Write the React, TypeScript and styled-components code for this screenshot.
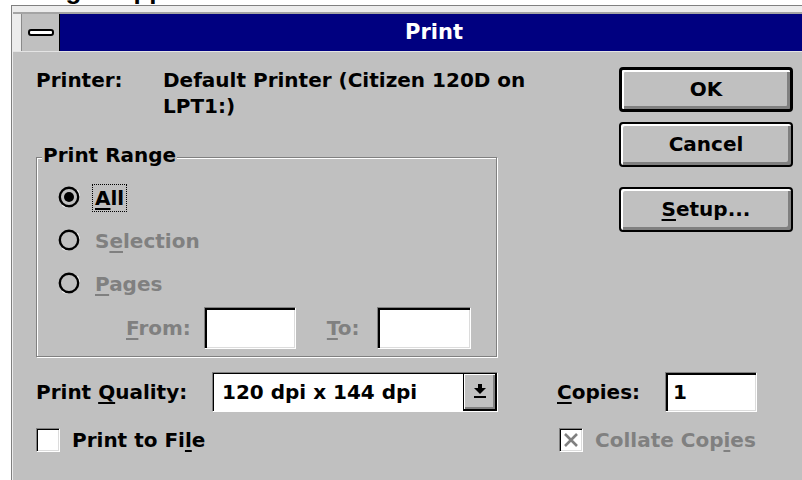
import styled, { createGlobalStyle } from 'styled-components';

const GlobalStyle = createGlobalStyle`
  html, body {
    margin: 0;
    padding: 0;
    background: #ffffff;
    overflow: hidden;
  }
  body {
    font-family: "DejaVu Sans", "Liberation Sans", sans-serif;
    font-size: 20px;
    font-weight: bold;
    color: #000000;
  }
`;

const Page = styled.div`
  width: 802px;
  height: 480px;
  overflow: hidden;
`;

// heading above the dialog, mostly scrolled away
const Caption = styled.div`
  height: 5px;
  overflow: hidden;
  padding-left: 2px;
  font-family: "Liberation Sans", Arial, sans-serif;
  font-size: 26px;
  line-height: 26px;
  white-space: nowrap;

  & > span {
    display: block;
    margin-top: -23px;
  }
`;

const Window = styled.div`
  box-sizing: border-box;
  margin-left: 11px;
  width: 797px;
  height: 475px;
  padding: 6px 0 0 1px;
  border-top: 1px solid #808080;
  border-left: 1px solid #808080;
  background: #ececec;
  display: flex;
  flex-direction: column;
`;

const Frame = styled.div`
  flex: 1;
  display: flex;
  flex-direction: column;
  border-top: 2px solid #a4a4a4;
  background: #c0c0c0;
`;

const TitleBar = styled.div`
  height: 37px;
  display: flex;
  padding-left: 8px;
  background: #ececec;
`;

const SysMenu = styled.div`
  box-sizing: border-box;
  width: 39px;
  display: flex;
  align-items: center;
  justify-content: center;
  background: #c0c0c0;
  border-left: 1px solid #8a8a8a;
  border-right: 1px solid #000000;
`;

const SysDash = styled.div`
  box-sizing: border-box;
  width: 26px;
  height: 7px;
  border: 2px solid #000000;
  border-radius: 3px;
  background: #ffffff;
`;

const Title = styled.div`
  flex: 1;
  background: #000080;
  color: #ffffff;
  font-size: 21px;
  line-height: 37px;
  text-align: center;
`;

const Body = styled.div`
  flex: 1;
  border-top: 1px solid #e4e4e4;
  padding: 15px 15px 0 23px;
  display: flex;
  flex-direction: column;
`;

const TopSection = styled.div`
  display: flex;
  justify-content: space-between;
  align-items: flex-start;
`;

const LeftColumn = styled.div`
  display: flex;
  flex-direction: column;
`;

const PrinterRow = styled.div`
  display: flex;
  line-height: 26px;
`;

const PrinterLabel = styled.div`
  width: 127px;
`;

const PrinterName = styled.div`
  width: 400px;
`;

const GroupBox = styled.div`
  position: relative;
  box-sizing: border-box;
  width: 461px;
  margin-top: 38px;
  padding: 26px 0 7px 21px;
  border: 1px solid #808080;
  box-shadow: inset 1px 1px 0 #ffffff, 1px 1px 0 #ffffff;
`;

// caption sits on top of the frame line
const Legend = styled.div`
  position: absolute;
  top: -16px;
  left: 5px;
  padding: 0 1px;
  line-height: 26px;
  background: #c0c0c0;
`;

const Options = styled.div`
  display: flex;
  flex-direction: column;
  gap: 15px;
`;

const RadioRow = styled.div`
  height: 28px;
  display: flex;
  align-items: center;
`;

const OptionLabel = styled.span<{ $focused?: boolean; $disabled?: boolean }>`
  margin-left: 10px;
  padding: 0 2px;
  line-height: 26px;
  border: 1px dotted ${(p) => (p.$focused ? '#000000' : 'transparent')};
  color: ${(p) => (p.$disabled ? '#808080' : '#000000')};
`;

const Key = styled.span`
  text-decoration: underline;
  text-decoration-thickness: 2px;
  text-underline-offset: 3px;
`;

const RangeRow = styled.div`
  display: flex;
  align-items: center;
  margin-top: 9px;
  padding-left: 68px;
`;

const RangeLabel = styled.span<{ $gap: number; $lead?: number }>`
  color: #808080;
  margin-left: ${(p) => p.$lead ?? 0}px;
  margin-right: ${(p) => p.$gap}px;
`;

const Field = styled.div<{ $width: number; $height: number }>`
  box-sizing: border-box;
  width: ${(p) => p.$width}px;
  height: ${(p) => p.$height}px;
  display: flex;
  align-items: center;
  padding-left: 7px;
  background: #ffffff;
  border: 1px solid;
  border-color: #808080 #ffffff #ffffff #808080;
  box-shadow: inset 2px 2px 0 #000000, inset -1px -1px 0 #dcdcdc;
`;

const ButtonColumn = styled.div`
  width: 174px;
  display: flex;
  flex-direction: column;
`;

const Button = styled.div<{ $default?: boolean; $space?: number }>`
  box-sizing: border-box;
  height: 45px;
  margin-top: ${(p) => p.$space ?? 0}px;
  display: flex;
  align-items: center;
  justify-content: center;
  padding-bottom: 2px;
  border: ${(p) => (p.$default ? 3 : 2)}px solid #000000;
  border-radius: 4px;
  background: #c0c0c0;
  box-shadow: inset 2px 2px 0 #ffffff, inset -3px -3px 0 #808080;
`;

const BottomGrid = styled.div`
  display: grid;
  grid-template-columns: 521px 1fr;
  grid-template-rows: 40px 24px;
  row-gap: 16px;
  margin-top: 15px;
`;

const Cell = styled.div<{ $indent?: number }>`
  display: flex;
  align-items: center;
  padding-left: ${(p) => p.$indent ?? 0}px;
`;

const FieldLabel = styled.span<{ $width: number }>`
  width: ${(p) => p.$width}px;
`;

const Combo = styled.div`
  box-sizing: border-box;
  width: 286px;
  height: 40px;
  display: flex;
  background: #ffffff;
  border: 1px solid;
  border-color: #808080 #ffffff #ffffff #808080;
  box-shadow: inset 1px 1px 0 #000000;
`;

const ComboText = styled.div`
  flex: 1;
  display: flex;
  align-items: center;
  padding-left: 9px;
`;

const DropButton = styled.div`
  box-sizing: border-box;
  width: 34px;
  display: flex;
  align-items: center;
  justify-content: center;
  background: #c0c0c0;
  border-left: 1px solid #000000;
  border-top: 1px solid #000000;
  border-right: 2px solid #000000;
  border-bottom: 2px solid #000000;
  box-shadow: inset 1px 1px 0 #ffffff, inset -2px -2px 0 #808080;
`;

const CheckBox = styled.div`
  box-sizing: border-box;
  width: 24px;
  height: 24px;
  display: flex;
  align-items: center;
  justify-content: center;
  background: #ffffff;
  border: 1px solid;
  border-color: #808080 #ffffff #ffffff #808080;
  box-shadow: inset 1px 1px 0 #000000, inset -1px -1px 0 #dcdcdc;
`;

const CheckText = styled.span<{ $disabled?: boolean }>`
  margin-left: 12px;
  color: ${(p) => (p.$disabled ? '#808080' : '#000000')};
`;

const RadioMark = ({ checked }: { checked?: boolean }) => (
  <svg width="24" height="24" viewBox="0 0 24 24">
    <path d="M19.4 4.4 A11 11 0 0 1 4.4 19.4" fill="none" stroke="#ffffff" strokeWidth="1.6" />
    <circle cx="11" cy="11" r="9.2" fill="none" stroke="#000000" strokeWidth="2.4" />
    {checked && <circle cx="11" cy="11" r="5" fill="#000000" />}
  </svg>
);

const DropArrow = () => (
  <svg width="14" height="15" viewBox="0 0 14 15">
    <rect x="5" y="0" width="4" height="4" fill="#000000" />
    <path d="M1 4 H13 L7 10 Z" fill="#000000" />
    <rect x="1" y="12" width="12" height="2" fill="#000000" />
  </svg>
);

const GrayCross = () => (
  <svg width="18" height="18" viewBox="0 0 18 18">
    <path d="M3 3 L15 15 M15 3 L3 15" stroke="#808080" strokeWidth="2.6" />
  </svg>
);

const App = () => (
  <>
    <GlobalStyle />
    <Page>
      <Caption>
        <span>Dialog Cropped</span>
      </Caption>
      <Window>
        <Frame>
          <TitleBar>
            <SysMenu>
              <SysDash />
            </SysMenu>
            <Title>Print</Title>
          </TitleBar>
          <Body>
            <TopSection>
              <LeftColumn>
                <PrinterRow>
                  <PrinterLabel>Printer:</PrinterLabel>
                  <PrinterName>Default Printer (Citizen 120D on LPT1:)</PrinterName>
                </PrinterRow>
                <GroupBox>
                  <Legend>Print Range</Legend>
                  <Options>
                    <RadioRow>
                      <RadioMark checked />
                      <OptionLabel $focused>
                        <Key>A</Key>ll
                      </OptionLabel>
                    </RadioRow>
                    <RadioRow>
                      <RadioMark />
                      <OptionLabel $disabled>
                        S<Key>e</Key>lection
                      </OptionLabel>
                    </RadioRow>
                    <RadioRow>
                      <RadioMark />
                      <OptionLabel $disabled>
                        <Key>P</Key>ages
                      </OptionLabel>
                    </RadioRow>
                  </Options>
                  <RangeRow>
                    <RangeLabel $gap={13}>
                      <Key>F</Key>rom:
                    </RangeLabel>
                    <Field $width={92} $height={42} />
                    <RangeLabel $gap={17} $lead={31}>
                      <Key>T</Key>o:
                    </RangeLabel>
                    <Field $width={94} $height={42} />
                  </RangeRow>
                </GroupBox>
              </LeftColumn>
              <ButtonColumn>
                <Button $default>OK</Button>
                <Button $space={10}>Cancel</Button>
                <Button $space={20}>
                  <span>
                    <Key>S</Key>etup...
                  </span>
                </Button>
              </ButtonColumn>
            </TopSection>
            <BottomGrid>
              <Cell>
                <FieldLabel $width={176}>
                  Print <Key>Q</Key>uality:
                </FieldLabel>
                <Combo>
                  <ComboText>120 dpi x 144 dpi</ComboText>
                  <DropButton>
                    <DropArrow />
                  </DropButton>
                </Combo>
              </Cell>
              <Cell>
                <FieldLabel $width={108}>
                  <Key>C</Key>opies:
                </FieldLabel>
                <Field $width={92} $height={40}>
                  1
                </Field>
              </Cell>
              <Cell>
                <CheckBox />
                <CheckText>
                  Print to Fi<Key>l</Key>e
                </CheckText>
              </Cell>
              <Cell $indent={2}>
                <CheckBox>
                  <GrayCross />
                </CheckBox>
                <CheckText $disabled>
                  Collate Cop<Key>i</Key>es
                </CheckText>
              </Cell>
            </BottomGrid>
          </Body>
        </Frame>
      </Window>
    </Page>
  </>
);

export default App;
